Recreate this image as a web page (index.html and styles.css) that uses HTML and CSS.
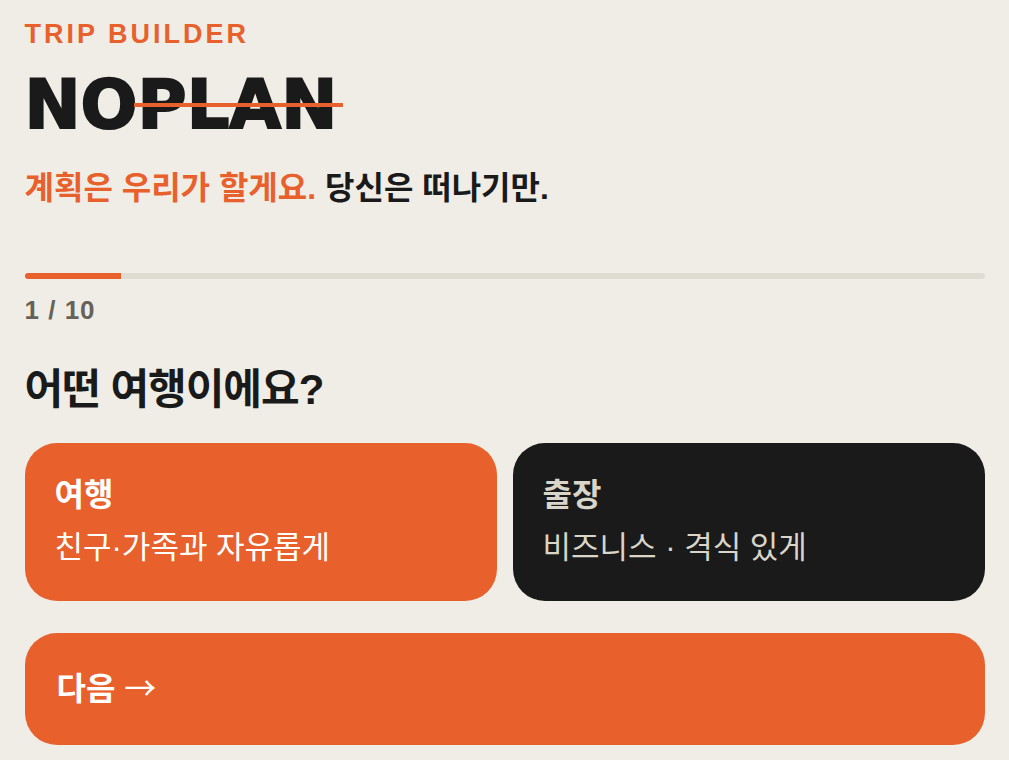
FILE: index.html
```html
<!DOCTYPE html>
<html lang="ko">
<head>
    <meta charset="UTF-8">
    <meta name="viewport" content="width=device-width, initial-scale=1.0">
    <title>NOPLAN</title>
    <link rel="stylesheet" href="styles.css">
</head>
<body>
    <main class="builder">
        <header class="header">
            <p class="eyebrow">TRIP BUILDER</p>
            <h1 class="logo">NO<span class="strike">PLAN</span></h1>
            <p class="tagline"><span class="accent">계획은 우리가 할게요.</span> 당신은 떠나기만.</p>
        </header>

        <div class="progress">
            <div class="progress-bar" style="width: 10%"></div>
        </div>
        <p class="step-count">1 / 10</p>

        <h2 class="question">어떤 여행이에요?</h2>

        <div class="options">
            <button type="button" class="option selected" aria-pressed="true">
                <span class="option-title">여행</span>
                <span class="option-desc">친구·가족과 자유롭게</span>
            </button>
            <button type="button" class="option" aria-pressed="false">
                <span class="option-title">출장</span>
                <span class="option-desc">비즈니스 · 격식 있게</span>
            </button>
        </div>

        <button type="button" class="next">다음 <span class="arrow">→</span></button>
    </main>
</body>
</html>
```
FILE: styles.css
```css
* {
    box-sizing: border-box;
    margin: 0;
    padding: 0;
}

body {
    background-color: #f0ede6;
    color: #1a1a1a;
    font-family: "Liberation Sans", "Noto Sans CJK KR", sans-serif;
    font-size: 32px;
}

button {
    border: none;
    font: inherit;
    text-align: left;
    cursor: pointer;
}

.builder {
    max-width: 960px;
    margin: 0 auto;
    padding: 16px 0;
}

.eyebrow {
    color: #e8612c;
    font-size: 27px;
    font-weight: 700;
    line-height: 36px;
    letter-spacing: 3px;
}

.logo {
    margin-top: 12px;
    font-family: "DejaVu Sans", sans-serif;
    font-size: 67px;
    font-weight: 700;
    line-height: 82px;
    -webkit-text-stroke: 2px #1a1a1a;
}

.strike {
    position: relative;
}

.strike::after {
    content: "";
    position: absolute;
    left: -4px;
    right: -6px;
    top: 47%;
    height: 4px;
    background-color: #e8612c;
}

.tagline {
    margin-top: 18px;
    font-weight: 700;
    line-height: 48px;
}

.accent {
    color: #e8612c;
}

.progress {
    height: 6px;
    margin-top: 61px;
    overflow: hidden;
    border-radius: 3px;
    background-color: #dfdcd4;
}

.progress-bar {
    height: 100%;
    background-color: #e8612c;
}

.step-count {
    margin-top: 11px;
    color: #66625a;
    font-size: 26px;
    font-weight: 700;
    line-height: 40px;
    letter-spacing: 1px;
}

.question {
    margin-top: 28px;
    font-size: 42px;
    font-weight: 700;
    line-height: 64px;
    letter-spacing: -1px;
}

.options {
    display: grid;
    grid-template-columns: 1fr 1fr;
    gap: 16px;
    margin-top: 21px;
}

.option {
    display: flex;
    flex-direction: column;
    gap: 4px;
    padding: 28px 30px;
    border-radius: 32px;
    background-color: #1a1a1a;
    color: #d9d5c9;
}

.option.selected {
    background-color: #e8612c;
    color: #fff;
}

.option-title {
    font-weight: 700;
    line-height: 48px;
}

.option-desc {
    font-size: 31px;
    line-height: 50px;
}

.next {
    width: 100%;
    margin-top: 32px;
    padding: 32px;
    border-radius: 32px;
    background-color: #e8612c;
    color: #fff;
    font-weight: 700;
    line-height: 48px;
}

.arrow {
    font-family: "Noto Sans CJK KR", sans-serif;
    font-weight: 400;
    line-height: 1;
}
```
